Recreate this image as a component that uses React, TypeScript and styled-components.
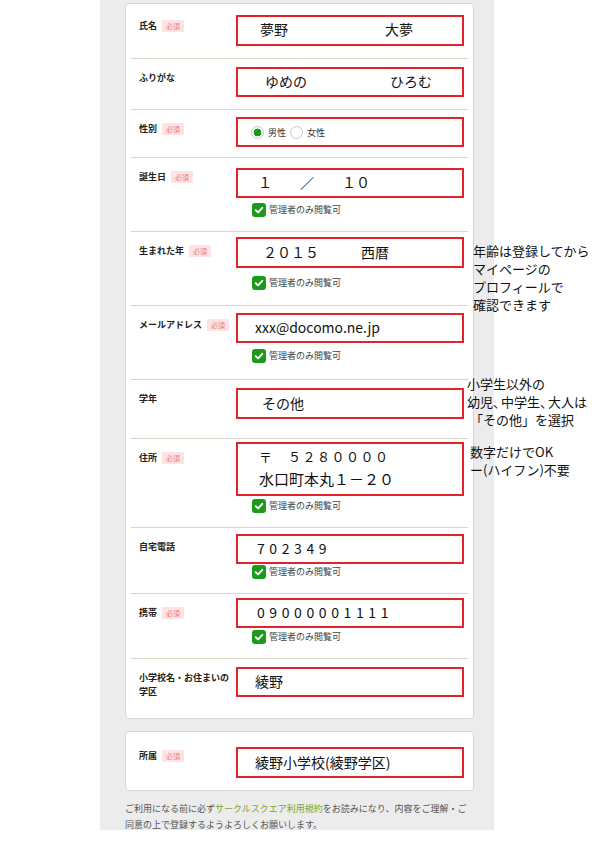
import React from "react";
import styled, { createGlobalStyle } from "styled-components";

const GlobalStyle = createGlobalStyle`
  html, body {
    margin: 0;
    padding: 0;
    background: #ffffff;
    overflow-x: hidden;
  }
  body {
    font-family: "Noto Sans CJK JP", "Noto Sans", sans-serif;
    color: #222;
  }
`;

type FieldRow = {
  label: React.ReactNode;
  required?: boolean;
  h: number;
  top: number;
  boxH?: number;
  check?: number;
  value: React.ReactNode;
};

export default function App() {
  const rows: FieldRow[] = [
    {
      label: "氏名",
      required: true,
      h: 52,
      top: 8,
      value: (
        <NamePair $pl={22}>
          <span>夢野</span>
          <span>大夢</span>
        </NamePair>
      ),
    },
    {
      label: "ふりがな",
      h: 51,
      top: 8,
      boxH: 30,
      value: (
        <NamePair $pl={27}>
          <span>ゆめの</span>
          <span>ひろむ</span>
        </NamePair>
      ),
    },
    {
      label: "性別",
      required: true,
      h: 48,
      top: 7,
      boxH: 30,
      value: (
        <Radios>
          <RadioItem>
            <Radio $checked />
            男性
          </RadioItem>
          <RadioItem>
            <Radio />
            女性
          </RadioItem>
        </Radios>
      ),
    },
    {
      label: "誕生日",
      required: true,
      h: 74,
      top: 10,
      boxH: 30,
      check: 5,
      value: <Value $pl={20}>１　　／　　１０</Value>,
    },
    {
      label: "生まれた年",
      required: true,
      h: 74,
      top: 5,
      check: 8,
      value: <Value $pl={25}>２０１５　　　西暦</Value>,
    },
    {
      label: "メールアドレス",
      required: true,
      h: 74,
      top: 7,
      boxH: 30,
      check: 6,
      value: <Value $pl={17}>xxx@docomo.ne.jp</Value>,
    },
    {
      label: "学年",
      h: 59,
      top: 8,
      value: <Value $pl={24}>その他</Value>,
    },
    {
      label: "住所",
      required: true,
      h: 89,
      top: 3,
      boxH: 54,
      check: 3,
      value: (
        <Address>
          <Zip>〒　５２８００００</Zip>
          <Street>水口町本丸１－２０</Street>
        </Address>
      ),
    },
    {
      label: "自宅電話",
      h: 66,
      top: 6,
      boxH: 30,
      check: 1,
      value: (
        <Value $pl={19} $spacing={4.6}>
          702349
        </Value>
      ),
    },
    {
      label: "携帯",
      required: true,
      h: 65,
      top: 4,
      boxH: 30,
      check: 2,
      value: (
        <Value $pl={19} $spacing={4.6}>
          09000001111
        </Value>
      ),
    },
    {
      label: (
        <>
          小学校名・お住まいの
          <br />
          学区
        </>
      ),
      h: 59,
      top: 8,
      boxH: 30,
      value: <Value $pl={17}>綾野</Value>,
    },
  ];

  return (
    <>
      <GlobalStyle />
      <Page>
        <Column>
          <Card $pt={3}>
            {rows.map((row, i) => (
              <Row key={i} $h={row.h} $last={i === rows.length - 1}>
                <Label>
                  <span>{row.label}</span>
                  {row.required && <Badge>必須</Badge>}
                </Label>
                <Field $top={row.top}>
                  <Box $h={row.boxH ?? 31}>{row.value}</Box>
                  {row.check !== undefined && (
                    <AdminOnly $mt={row.check}>
                      <CheckMark>
                        <svg width="10" height="10" viewBox="0 0 10 10">
                          <path
                            d="M1.8 5.2 L4.1 7.4 L8.3 2.8"
                            fill="none"
                            stroke="#fff"
                            strokeWidth="1.9"
                            strokeLinecap="round"
                            strokeLinejoin="round"
                          />
                        </svg>
                      </CheckMark>
                      管理者のみ閲覧可
                    </AdminOnly>
                  )}
                </Field>
              </Row>
            ))}
          </Card>

          <Card $pt={5} $mt={12}>
            <Row $h={53} $last>
              <Label>
                <span>所属</span>
                <Badge>必須</Badge>
              </Label>
              <Field $top={10}>
                <Box $h={31}>
                  <Value $pl={17}>綾野小学校(綾野学区)</Value>
                </Box>
              </Field>
            </Row>
          </Card>

          <Terms>
            ご利用になる前に必ず<TermsLink>サークルスクエア利用規約</TermsLink>
            をお読みになり、内容をご理解・ご
            <br />
            同意の上で登録するようよろしくお願いします。
          </Terms>
        </Column>

        <Note $x={473} $y={242}>
          年齢は登録してから
          <br />
          マイページの
          <br />
          プロフィールで
          <br />
          確認できます
        </Note>
        <Note $x={467} $y={375}>
          小学生以外の
          <br />
          幼児<Narrow>、</Narrow>中学生<Narrow>、</Narrow>大人は
          <br />
          <Indent>「その他」を選択</Indent>
        </Note>
        <Note $x={470} $y={443}>
          数字だけでOK
          <br />
          ー(ハイフン)不要
        </Note>
      </Page>
    </>
  );
}

const Page = styled.div`
  position: relative;
  width: 595px;
  min-height: 842px;
  overflow: hidden;
`;

const Column = styled.div`
  margin-left: 100px;
  width: 394px;
  box-sizing: border-box;
  padding: 3px 20px 0 25px;
  background: #ececec;
  height: 830px;
`;

const Card = styled.div<{ $pt: number; $mt?: number }>`
  width: 349px;
  box-sizing: border-box;
  margin-top: ${(p) => p.$mt ?? 0}px;
  padding-top: ${(p) => p.$pt}px;
  background: #ffffff;
  border: 1px solid #d9d7cc;
  border-radius: 4px;
`;

const Row = styled.div<{ $h: number; $last?: boolean }>`
  display: grid;
  grid-template-columns: 97px 1fr;
  height: ${(p) => p.$h}px;
  box-sizing: border-box;
  margin: 0 5px;
  padding: 0 4px 0 8px;
  border-bottom: ${(p) => (p.$last ? "none" : "1px solid #d9d6c8")};
`;

const Label = styled.div`
  display: flex;
  align-items: flex-start;
  gap: 5px;
  padding-top: 12px;
  font-size: 9px;
  line-height: 14px;
  font-weight: 700;
  color: #222;
  white-space: nowrap;
`;

const Badge = styled.span`
  display: inline-flex;
  align-items: center;
  justify-content: center;
  width: 22px;
  height: 12px;
  margin-top: 1px;
  background: #fde3e3;
  color: #ef7a7a;
  font-size: 7px;
  font-weight: 400;
  line-height: 12px;
`;

const Field = styled.div<{ $top: number }>`
  display: flex;
  flex-direction: column;
  padding-top: ${(p) => p.$top}px;
`;

const Box = styled.div<{ $h: number }>`
  height: ${(p) => p.$h}px;
  box-sizing: border-box;
  border: 2px solid #e3222b;
  display: flex;
  align-items: center;
`;

const Value = styled.div<{ $pl: number; $spacing?: number }>`
  padding-left: ${(p) => p.$pl}px;
  padding-bottom: 2px;
  font-size: 14px;
  line-height: 20px;
  color: #111;
  letter-spacing: ${(p) => p.$spacing ?? 0}px;
  white-space: nowrap;
`;

const NamePair = styled.div<{ $pl: number }>`
  display: grid;
  grid-template-columns: 125px auto;
  padding-left: ${(p) => p.$pl}px;
  padding-bottom: 3px;
  font-size: 14px;
  line-height: 20px;
  color: #111;
`;

const Address = styled.div`
  display: flex;
  flex-direction: column;
  padding-left: 21px;
  color: #111;
  white-space: nowrap;
`;

const Zip = styled.div`
  font-size: 13px;
  line-height: 20px;
  letter-spacing: 1.5px;
`;

const Street = styled.div`
  font-size: 15px;
  line-height: 24px;
`;

const Radios = styled.div`
  display: flex;
  align-items: center;
  gap: 4px;
  padding-left: 13px;
`;

const RadioItem = styled.label`
  display: flex;
  align-items: center;
  gap: 4px;
  font-size: 9px;
  color: #333;
`;

const Radio = styled.span<{ $checked?: boolean }>`
  width: 13px;
  height: 13px;
  box-sizing: border-box;
  border-radius: 50%;
  border: 1px solid #c9c9c0;
  background: ${(p) =>
    p.$checked
      ? "radial-gradient(circle, #1a9a1a 0 3.6px, #ffffff 4.2px)"
      : "#ffffff"};
`;

const AdminOnly = styled.div<{ $mt: number }>`
  display: flex;
  align-items: center;
  gap: 3px;
  margin-top: ${(p) => p.$mt}px;
  padding-left: 16px;
  font-size: 9px;
  line-height: 14px;
  color: #444;
`;

const CheckMark = styled.span`
  width: 14px;
  height: 14px;
  border-radius: 3px;
  background: #1c9a1c;
  display: flex;
  align-items: center;
  justify-content: center;
`;

const Terms = styled.p`
  margin: 10px 0 0;
  font-size: 9px;
  line-height: 16px;
  color: #555;
  white-space: nowrap;
`;

const TermsLink = styled.span`
  color: #7aa62a;
`;

const Note = styled.div<{ $x: number; $y: number }>`
  position: absolute;
  left: ${(p) => p.$x}px;
  top: ${(p) => p.$y}px;
  font-size: 13px;
  line-height: 18px;
  color: #111;
  white-space: nowrap;
`;

const Narrow = styled.span`
  letter-spacing: -5px;
`;

const Indent = styled.span`
  padding-left: 3px;
`;
